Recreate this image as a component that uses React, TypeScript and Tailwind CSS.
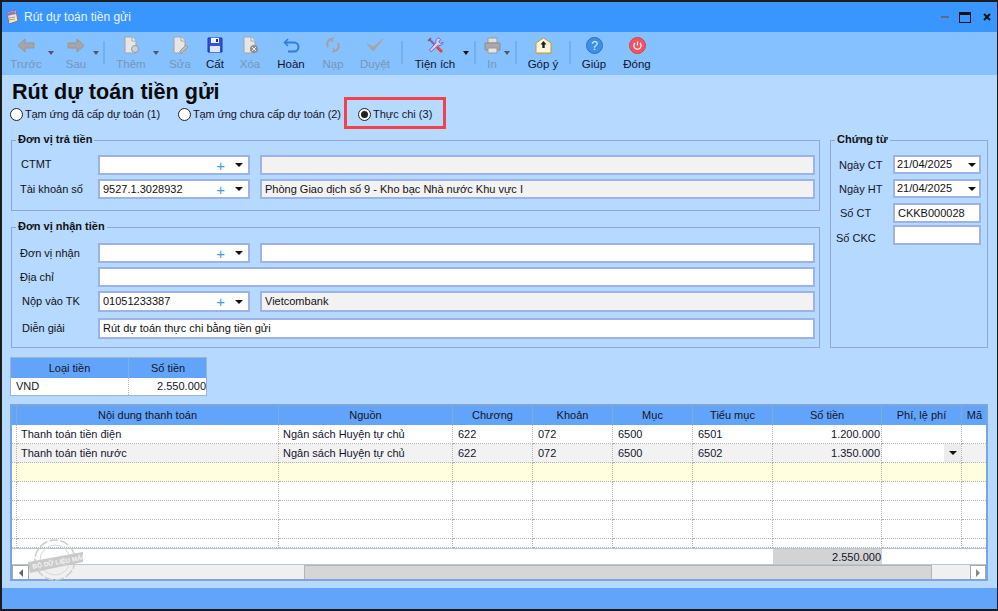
import { ReactNode } from 'react'

const Caret = ({ className = '' }: { className?: string }) => (
  <span className={`inline-block w-0 h-0 border-x-[4px] border-x-transparent border-t-[4px] border-t-[#111] ${className}`} />
)

const Sep = ({ className = '' }: { className?: string }) => (
  <div className={`w-[2px] -mr-px shrink-0 h-[23px] self-start mt-[9px] bg-[#78aeec] ${className}`} />
)

const ToolCaret = ({ className = '', off = false }: { className?: string; off?: boolean }) => (
  <div className={`w-[6px] h-full flex justify-center items-start pt-[19px] ${className}`}>
    <span className={`shrink-0 w-0 h-0 border-x-[3.5px] border-x-transparent border-t-[4px] ${off ? 'border-t-[#556]' : 'border-t-[#111]'}`} />
  </div>
)

function Tool({ w, label, off, children }: { w: string; label: string; off?: boolean; children: ReactNode }) {
  return (
    <div className={`${w} flex flex-col items-center shrink-0 pt-[3px]`}>
      <div className="h-[20px] flex items-center justify-center">{children}</div>
      <span className={`mt-[2px] text-[11.5px] leading-[15px] whitespace-nowrap ${off ? 'text-[#7d95b0]' : 'text-[#14142a]'}`}>{label}</span>
    </div>
  )
}

const DocIcon = ({ badge }: { badge: ReactNode }) => (
  <svg width="18" height="18" viewBox="0 0 18 18">
    <path d="M3 1h7l4 4v12H3z" fill="#e6e6e6" stroke="#a4a4a4" />
    <path d="M10 1v4h4" fill="#f6f6f6" stroke="#a4a4a4" />
    {badge}
  </svg>
)

function Field({ value = '', grey, className = '' }: { value?: string; grey?: boolean; className?: string }) {
  return (
    <div className={`h-full border-2 border-[#9db2e6] px-[3px] flex items-center text-[11px] text-[#111] whitespace-nowrap ${grey ? 'bg-[#f2f2f2]' : 'bg-white'} ${className}`}>
      {value}
    </div>
  )
}

function Combo({ value = '' }: { value?: string }) {
  return (
    <div className="w-[152px] h-full shrink-0 border-2 border-[#9db2e6] bg-white flex items-center pl-[3px] text-[11px] text-[#111]">
      <span className="flex-1">{value}</span>
      <span className="text-[#3f9bea] text-[15px] leading-none mr-[10px]">+</span>
      <Caret className="mr-[5px]" />
    </div>
  )
}

function Row({ label, pad, h = 'h-[20px]', children }: { label: string; pad: string; h?: string; children: ReactNode }) {
  return (
    <div className={`flex items-center ${h} text-[11px] text-[#111]`}>
      <div className={`w-[86px] shrink-0 whitespace-nowrap ${pad}`}>{label}</div>
      {children}
    </div>
  )
}

function Group({ title, className, children }: { title: string; className: string; children: ReactNode }) {
  return (
    <div className={`relative border border-[#8ea6dc] ${className}`}>
      <span className="absolute left-[4px] -top-[9px] bg-[#b5d9ff] px-[2px] text-[11px] leading-[15px] font-bold text-[#111] whitespace-nowrap">{title}</span>
      {children}
    </div>
  )
}

function DateField({ value }: { value: string }) {
  return (
    <div className="w-[88px] h-[19px] border-2 border-[#9db2e6] bg-white flex items-center pl-[2px] pr-[3px] justify-between text-[11px] text-[#111]">
      {value}
      <Caret />
    </div>
  )
}

const cols = 'grid grid-cols-[5px_262px_174px_80px_80px_80px_80px_109px_80px_26px]'
const cell = 'border-r border-b border-dotted border-[#b4b4b4] flex items-center whitespace-nowrap overflow-hidden'
const heads = ['', 'Nội dung thanh toán', 'Nguồn', 'Chương', 'Khoản', 'Mục', 'Tiểu mục', 'Số tiền', 'Phí, lệ phí', 'Mã']

const rows = [
  { bg: 'bg-white', h: 'h-[19px]', vals: ['', 'Thanh toán tiền điện', 'Ngân sách Huyện tự chủ', '622', '072', '6500', '6501', '1.200.000', '', ''] },
  { bg: 'bg-[#f2f2f2]', h: 'h-[19px]', vals: ['', 'Thanh toán tiền nước', 'Ngân sách Huyện tự chủ', '622', '072', '6500', '6502', '1.350.000', '', ''] },
  { bg: 'bg-[#ffffe0]', h: 'h-[19px]', vals: ['', '', '', '', '', '', '', '', '', ''] },
  { bg: 'bg-white', h: 'h-[19px]', vals: ['', '', '', '', '', '', '', '', '', ''] },
  { bg: 'bg-white', h: 'h-[19px]', vals: ['', '', '', '', '', '', '', '', '', ''] },
  { bg: 'bg-white', h: 'h-[19px]', vals: ['', '', '', '', '', '', '', '', '', ''] },
  { bg: 'bg-white', h: 'h-[9px]', vals: ['', '', '', '', '', '', '', '', '', ''] },
]

export default function App() {
  return (
    <div className="relative w-[998px] h-[611px] flex flex-col overflow-hidden bg-[#b5d9ff] border-t-2 border-b-2 border-l-2 border-r border-[#1c1c1c] font-['Liberation_Sans',Arial,sans-serif]">
      {/* title bar */}
      <div className="h-[30px] shrink-0 bg-[#3a96ff] flex items-center pl-[3px] pr-[6px]">
        <svg width="14" height="16" viewBox="0 0 14 16">
          <path d="M2 3l9-2 2 11-9 3z" fill="#f4e9a8" stroke="#7a6ab0" />
          <path d="M1 4l9-2 1 3-9 2z" fill="#8a78c8" />
          <path d="M4 9l6-1M4 11l6-1" stroke="#a89ad0" />
        </svg>
        <span className="ml-[5px] text-[12px] text-[#eaf4ff]">Rút dự toán tiền gửi</span>
        <div className="ml-auto flex items-center">
          <span className="w-[8px] h-[2px] bg-[#5b6b80] mr-[10px]" />
          <span className="w-[12px] h-[11px] border border-[#111] border-t-[3px] mr-[12px]" />
          <svg width="8" height="8" viewBox="0 0 8 8"><path d="M1 1l6 6M7 1L1 7" stroke="#111" strokeWidth="2" /></svg>
        </div>
      </div>

      {/* toolbar */}
      <div className="h-[43px] shrink-0 bg-[#85c0ff] flex pl-px">
        <Tool w="w-[46px]" label="Trước" off>
          <svg width="18" height="15" viewBox="0 0 18 15"><path d="M8 1L1 7.5 8 14V10h9V5H8z" fill="#a5a5a5" stroke="#979797" /></svg>
        </Tool>
        <ToolCaret off className="-ml-px" />
        <Tool w="w-[44px]" label="Sau" off>
          <svg width="18" height="15" viewBox="0 0 18 15"><path d="M10 1l7 6.5L10 14V10H1V5h9z" fill="#a5a5a5" stroke="#979797" /></svg>
        </Tool>
        <ToolCaret off className="-ml-[5px]" />
        <Sep className="ml-[4px]" />
        <Tool w="w-[54px]" label="Thêm" off>
          <DocIcon badge={<circle cx="13" cy="13" r="3.5" fill="#c9d2da" stroke="#999" />} />
        </Tool>
        <ToolCaret off className="-ml-[5px]" />
        <Tool w="w-[42px]" label="Sửa" off>
          <DocIcon badge={<path d="M9 15l6-6 2 2-6 6H9z" fill="#bdbdbd" stroke="#999" />} />
        </Tool>
        <Tool w="w-[28px]" label="Cất">
          <svg width="16" height="16" viewBox="0 0 16 16">
            <path d="M1 1h14v14H1z" fill="#2f55d8" stroke="#1c34a8" />
            <path d="M4 1h8v5H4z" fill="#eef3ff" />
            <path d="M9 2h2v3H9z" fill="#1c34a8" />
            <path d="M3 9h10v6H3z" fill="#dfe8ff" />
          </svg>
        </Tool>
        <Tool w="w-[42px]" label="Xóa" off>
          <DocIcon
            badge={
              <>
                <circle cx="13" cy="13" r="4" fill="#8e8e8e" />
                <path d="M11 11l4 4M15 11l-4 4" stroke="#eee" />
              </>
            }
          />
        </Tool>
        <Tool w="w-[40px]" label="Hoàn">
          <svg width="17" height="15" viewBox="0 0 17 15" fill="none">
            <path d="M5 1L1.5 4.5 5 8" stroke="#2d7fdc" strokeWidth="1.6" />
            <path d="M2 4.5h9a4 4 0 0 1 0 9H5" stroke="#2d7fdc" strokeWidth="2" />
          </svg>
        </Tool>
        <Tool w="w-[44px]" label="Nạp" off>
          <svg width="16" height="16" viewBox="0 0 16 16" fill="none" stroke="#a2a2a2" strokeWidth="2.2">
            <path d="M3 10a5.5 5.5 0 0 1 2-7.5L7 2" />
            <path d="M13 6a5.5 5.5 0 0 1-2 7.5L9 14" />
            <path d="M9 1l-3 1 2 3M7 15l3-1-2-3" strokeWidth="1.4" />
          </svg>
        </Tool>
        <Tool w="w-[40px]" label="Duyệt" off>
          <svg width="18" height="15" viewBox="0 0 18 15" fill="none"><path d="M1 6l6 7L17 1 7.5 9z" fill="#a5a5a5" stroke="#a5a5a5" /></svg>
        </Tool>
        <Sep className="ml-[6px]" />
        <Tool w="w-[66px]" label="Tiện ích">
          <svg width="17" height="17" viewBox="0 0 17 17" fill="none">
            <path d="M2 2l7 7" stroke="#8068b8" strokeWidth="2.4" />
            <path d="M4 1L1 4" stroke="#666" strokeWidth="1.2" />
            <path d="M12 1a3.4 3.4 0 0 0-3 4.6L2.5 13 4 14.8l7.2-6.5A3.4 3.4 0 0 0 16 5l-2.2 1.8-2-1.8L13.6 2.6z" fill="#d8ccf0" stroke="#6a55a8" strokeWidth="0.8" />
            <path d="M10 10l5 5" stroke="#e0483e" strokeWidth="3" />
          </svg>
        </Tool>
        <ToolCaret className="-ml-[5px]" />
        <Sep className="ml-[5px]" />
        <Tool w="w-[34px]" label="In" off>
          <svg width="17" height="17" viewBox="0 0 17 17">
            <path d="M4 1h9v5H4z" fill="#e0e0e0" stroke="#999" />
            <path d="M1 6h15v7H1z" fill="#a8a8a8" stroke="#8d8d8d" />
            <path d="M4 11h9v5H4z" fill="#e6e6e6" stroke="#999" />
          </svg>
        </Tool>
        <ToolCaret off className="-ml-[5px]" />
        <Sep className="ml-[5px]" />
        <Tool w="w-[54px]" label="Góp ý">
          <svg width="17" height="17" viewBox="0 0 17 17">
            <path d="M1 6l7.5-5L16 6v10H1z" fill="#fff7dc" stroke="#c49a2a" />
            <path d="M8.5 4l3 3.5H9.7V11H7.3V7.5H5.5z" fill="#1e1e1e" />
          </svg>
        </Tool>
        <Sep className="-ml-px" />
        <Tool w="w-[48px]" label="Giúp">
          <svg width="17" height="17" viewBox="0 0 17 17">
            <circle cx="8.5" cy="8.5" r="8" fill="#3f8fe8" stroke="#2c6fc4" />
            <text x="8.5" y="13" textAnchor="middle" fontSize="12" fill="#dff0ff" fontFamily="Liberation Sans">?</text>
          </svg>
        </Tool>
        <Tool w="w-[38px]" label="Đóng">
          <svg width="17" height="17" viewBox="0 0 17 17" fill="none">
            <circle cx="8.5" cy="8.5" r="8" fill="#ee5560" stroke="#d8404c" />
            <path d="M6 6a3.6 3.6 0 1 0 5 0M8.5 4.5v4" stroke="#fff" strokeWidth="1.2" />
          </svg>
        </Tool>
      </div>

      {/* body */}
      <div className="flex-1 flex flex-col pl-[8px] pr-[9px]">
        <h1 className="mt-[4px] ml-[2px] text-[21.6px] leading-[25px] font-bold text-[#0a0a0a]">Rút dự toán tiền gửi</h1>
        <div className="flex h-[17px] mt-[2px] items-center text-[11px] text-[#14142a]">
          <span className="w-[13px] h-[13px] rounded-full border border-[#222] bg-white" />
          <span className="ml-[2px] w-[153px] whitespace-nowrap tracking-[-0.12px]">Tạm ứng đã cấp dự toán (1)</span>
          <span className="w-[13px] h-[13px] rounded-full border border-[#222] bg-white" />
          <span className="ml-[2px] w-[165px] whitespace-nowrap tracking-[-0.12px]">Tạm ứng chưa cấp dự toán (2)</span>
          <span className="w-[13px] h-[13px] rounded-full border border-[#222] bg-white flex items-center justify-center">
            <span className="w-[7px] h-[7px] rounded-full bg-[#222]" />
          </span>
          <span className="ml-[2px]">Thực chi (3)</span>
        </div>

        <div className="flex mt-[17px] ml-px gap-[10px]">
          <div className="w-[809px] flex flex-col">
            <Group title="Đơn vị trả tiền" className="h-[71px] pt-[14px] flex flex-col gap-[4px]">
              <Row label="CTMT" pad="pl-[9px] -mt-[2px]">
                <Combo />
                <Field grey className="ml-[10px] w-[555px]" />
              </Row>
              <Row label="Tài khoản số" pad="pl-[8px]">
                <Combo value="9527.1.3028932" />
                <Field grey className="ml-[10px] w-[555px]" value="Phòng Giao dịch số 9 - Kho bạc Nhà nước Khu vực I" />
              </Row>
            </Group>
            <Group title="Đơn vị nhận tiền" className="h-[121px] mt-[16px] pt-[15px] flex flex-col gap-[4px]">
              <Row label="Đơn vị nhận" pad="pl-[8px]">
                <Combo />
                <Field className="ml-[10px] w-[555px]" />
              </Row>
              <Row label="Địa chỉ" pad="pl-[8px]">
                <Field className="w-[717px]" />
              </Row>
              <Row label="Nộp vào TK" pad="pl-[10px]" h="h-[21px]">
                <Combo value="01051233387" />
                <Field grey className="ml-[10px] w-[555px]" value="Vietcombank" />
              </Row>
              <div className="mt-[2px]">
                <Row label="Diễn giải" pad="pl-[10px]" h="h-[21px]">
                  <Field className="w-[717px]" value="Rút dự toán thực chi bằng tiền gửi" />
                </Row>
              </div>
            </Group>
          </div>
          <Group title="Chứng từ" className="w-[158px] h-[208px] pt-[14px] flex flex-col">
            <div className="flex items-center h-[19px] text-[11px] text-[#14142a] mb-[5px]">
              <span className="w-[62px] pl-[8px] pt-[2px]">Ngày CT</span>
              <DateField value="21/04/2025" />
            </div>
            <div className="flex items-center h-[19px] text-[11px] text-[#14142a] mb-[5px]">
              <span className="w-[62px] pl-[8px] pt-[2px]">Ngày HT</span>
              <DateField value="21/04/2025" />
            </div>
            <div className="flex items-center h-[20px] text-[11px] text-[#14142a] mb-[2px]">
              <span className="w-[62px] pl-[9px]">Số CT</span>
              <Field className="w-[88px]" value="CKKB000028" />
            </div>
            <div className="flex items-center h-[20px] text-[11px] text-[#14142a]">
              <span className="w-[62px] pl-[5px] pt-[6px]">Số CKC</span>
              <Field className="w-[88px]" />
            </div>
          </Group>
        </div>

        {/* currency table */}
        <div className="mt-[9px] w-[197px] border border-[#9cb4d8] text-[11px] text-[#14142a]">
          <div className="grid grid-cols-[118px_78px] h-[20px] bg-[#62a4f9]">
            <div className="border-r border-[#84aee2] flex items-center justify-center">Loại tiền</div>
            <div className="flex items-center justify-center">Số tiền</div>
          </div>
          <div className="grid grid-cols-[118px_78px] h-[17px] bg-white">
            <div className="border-r border-dotted border-[#b4b4b4] pl-[5px] flex items-center">VND</div>
            <div className="flex items-center justify-end pr-px">2.550.000</div>
          </div>
        </div>

        {/* detail grid */}
        <div className="mt-[8px] h-[177px] w-[978px] border-2 border-[#7ea4d8] flex flex-col text-[11px] text-[#14142a] overflow-hidden">
          <div className={`${cols} h-[19px] bg-[#62a4f9] shrink-0`}>
            {heads.map((t, i) => (
              <div key={i} className="border-r border-[#7fa9e0] flex items-center justify-center whitespace-nowrap overflow-hidden">{t}</div>
            ))}
          </div>
          {rows.map((r, i) => (
            <div key={i} className={`${cols} ${r.h} ${r.bg} shrink-0`}>
              {r.vals.map((v, j) => (
                <div key={j} className={`${cell} ${j === 7 ? 'justify-end pr-px' : j >= 3 ? 'pl-[5px]' : 'pl-[4px]'} ${i === 1 && j === 8 ? 'bg-white justify-end !pl-0' : ''}`}>
                  {i === 1 && j === 8 ? (
                    <span className="w-[17px] h-full bg-[#ececec] flex items-center justify-center"><Caret /></span>
                  ) : (
                    v
                  )}
                </div>
              ))}
            </div>
          ))}
          <div className={`${cols} h-[16px] bg-white border-t border-[#b8c4d8] shrink-0`}>
            <div className="col-span-7" />
            <div className="bg-[#d3d3d3] flex items-center justify-end pr-px">2.550.000</div>
          </div>
          <div className="h-[17px] flex bg-[#f0f0f0] border-t border-[#b8c4d8] shrink-0">
            <div className="w-[17px] bg-white border border-[#a8a8a8] flex items-center justify-center">
              <span className="w-0 h-0 border-y-[4px] border-y-transparent border-r-[4px] border-r-[#666]" />
            </div>
            <div className="ml-[275px] w-[628px] bg-[#d6d6d6] border border-[#b4b4b4]" />
            <div className="flex-1" />
            <div className="w-[16px] bg-white border border-[#a8a8a8] flex items-center justify-center">
              <span className="w-0 h-0 border-y-[4px] border-y-transparent border-l-[4px] border-l-[#888]" />
            </div>
          </div>
        </div>
      </div>

      <div className="h-[21px] shrink-0 bg-[#62a4f9]" />

      {/* annotation box */}
      <div className="absolute left-[342px] top-[95px] w-[102px] h-[32px] border-[3px] border-[#f4424a] pointer-events-none" />

      {/* watermark */}
      <div className="absolute left-[24px] top-[534px] w-[60px] h-[46px] pointer-events-none">
        <svg width="60" height="46" viewBox="0 0 60 46" fill="none" className="absolute left-0 top-0">
          <circle cx="29" cy="24" r="20" stroke="#cdcdcd" strokeWidth="1.5" strokeDasharray="9 2" />
          <circle cx="29" cy="24" r="15" stroke="#d8d8d8" strokeWidth="1" />
          <path d="M2 26L57 16V26L4 37z" fill="#c9c9c9" />
        </svg>
        <span className="absolute left-[6px] top-[22px] -rotate-[10deg] text-[6.5px] leading-[8px] font-bold text-[#f4f4f4] whitespace-nowrap">BỘ DỮ LIỆU MẪU</span>
      </div>
    </div>
  )
}
